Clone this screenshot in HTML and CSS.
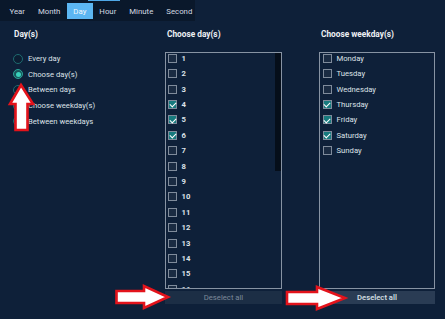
FILE: index.html
```html
<!DOCTYPE html>
<html>
<head>
<meta charset="utf-8">
<link rel="stylesheet" href="styles.css">
</head>
<body>
<div class="page">
  <div class="topline"></div>
  <nav class="tabs">
    <span class="tab">Year</span>
    <span class="tab">Month</span>
    <span class="tab active">Day</span>
    <span class="tab">Hour</span>
    <span class="tab">Minute</span>
    <span class="tab last">Second</span>
  </nav>
  <main class="cols">
    <section class="col col-mode">
      <h3 class="head">Day(s)</h3>
      <ul class="radios">
        <li class="radio-row"><span class="radio"></span>Every day</li>
        <li class="radio-row"><span class="radio on"></span>Choose day(s)</li>
        <li class="radio-row"><span class="radio"></span>Between days</li>
        <li class="radio-row"><span class="radio"></span>Choose weekday(s)</li>
        <li class="radio-row"><span class="radio"></span>Between weekdays</li>
      </ul>
    </section>
    <section class="col col-days">
      <h3 class="head">Choose day(s)</h3>
      <div class="box">
        <ul class="list nums">
          <li class="item"><span class="cb"></span>1</li>
          <li class="item"><span class="cb"></span>2</li>
          <li class="item"><span class="cb"></span>3</li>
          <li class="item"><span class="cb on"></span>4</li>
          <li class="item"><span class="cb on"></span>5</li>
          <li class="item"><span class="cb on"></span>6</li>
          <li class="item"><span class="cb"></span>7</li>
          <li class="item"><span class="cb"></span>8</li>
          <li class="item"><span class="cb"></span>9</li>
          <li class="item"><span class="cb"></span>10</li>
          <li class="item"><span class="cb"></span>11</li>
          <li class="item"><span class="cb"></span>12</li>
          <li class="item"><span class="cb"></span>13</li>
          <li class="item"><span class="cb"></span>14</li>
          <li class="item"><span class="cb"></span>15</li>
          <li class="item"><span class="cb"></span>16</li>
        </ul>
        <div class="scroll"><div class="thumb"></div></div>
      </div>
      <button class="btn disabled">Deselect all</button>
    </section>
    <section class="col col-week">
      <h3 class="head">Choose weekday(s)</h3>
      <div class="box">
        <ul class="list">
          <li class="item"><span class="cb"></span>Monday</li>
          <li class="item"><span class="cb"></span>Tuesday</li>
          <li class="item"><span class="cb"></span>Wednesday</li>
          <li class="item"><span class="cb on"></span>Thursday</li>
          <li class="item"><span class="cb on"></span>Friday</li>
          <li class="item"><span class="cb on"></span>Saturday</li>
          <li class="item"><span class="cb"></span>Sunday</li>
        </ul>
      </div>
      <button class="btn">Deselect all</button>
    </section>
  </main>
  <svg class="arrows" width="445" height="319" viewBox="0 0 445 319">
    <polygon points="21,85 33,104 27.5,104 27.5,130 15.5,130 15.5,104 10,104" />
    <polygon points="116.5,291 144,291 144,286 168,297 144,308 144,303 116.5,303" />
    <polygon points="287,292 317,292 317,287 345,298 317,309 317,304 287,304" />
  </svg>
</div>
</body>
</html>
```
FILE: styles.css
```css
* { box-sizing: border-box; }
html, body { margin: 0; padding: 0; }
body {
  background: #0e2039;
  font-family: Roboto, "Liberation Sans", sans-serif;
  font-size: 7.7px;
  color: #dde2e8;
  width: 445px;
  height: 319px;
  overflow: hidden;
}
.page { position: relative; width: 445px; height: 319px; }
.topline {
  position: absolute; left: 88px; top: 0; width: 32px; height: 1px; background: #4fa7e6;
}
.tabs {
  display: inline-flex;
  background: #0a182b;
  padding: 3px 0 2px 3px;
  height: 21px;
}
.tab {
  display: flex; align-items: center;
  padding: 0 6.5px;
  height: 16px;
  color: #d3d9e1;
  font-size: 7.8px;
}
.tab.last { padding-right: 3px; }
.tab.active { background: #5cb6f2; color: #f3f8fc; }
.cols { display: flex; padding-top: 7px; }
.col { display: flex; flex-direction: column; }
.col-mode { width: 165px; padding-left: 13px; }
.col-days { width: 117px; margin-right: 37px; }
.col-week { width: 116px; }
.head {
  margin: 0 0 12px 0;
  font-size: 8.3px;
  line-height: 12px;
  font-weight: 700;
  color: #eef1f5;
}
.col-mode .head { padding-left: 1px; }
.col-days .head, .col-week .head { padding-left: 2px; }
ul { list-style: none; margin: 0; padding: 0; }
.radios { margin-top: -1px; }
.radio-row {
  display: flex; align-items: center; height: 15.6px;
  color: #dde2e8;
}
.radio {
  width: 10px; height: 10px; border-radius: 50%;
  border: 1.5px solid #1e6b70;
  background: #0c1e33;
  margin-right: 5px;
  display: flex; align-items: center; justify-content: center;
}
.radio.on { border-color: #2aa395; background: #17555a; }
.radio.on::after {
  content: ""; width: 5px; height: 5px; border-radius: 50%; background: #39d1bb;
}
.box {
  position: relative;
  height: 237px;
  border: 1px solid #8793a3;
  overflow: hidden;
}
.list { margin-top: -2.3px; padding-left: 2px; }
.col-week .list { padding-left: 2.5px; }
.item {
  display: flex; align-items: center; height: 15.4px;
  color: #dde2e8;
}
.nums .item { font-weight: 700; }
.cb {
  width: 9px; height: 9px;
  border: 1.2px solid #7f8b9b;
  background: #1a2b42;
  margin-right: 4.5px;
  position: relative;
  flex: none;
}
.col-week .cb { margin-right: 5px; }
.cb.on { background: #177a7e; border-color: #7f8b9b; }
.cb.on::after {
  content: ""; position: absolute; left: 1.6px; top: 0.2px;
  width: 3px; height: 5px;
  border: solid #ffffff; border-width: 0 1.3px 1.3px 0;
  transform: rotate(45deg);
}
.scroll {
  position: absolute; right: 0; top: 0; width: 6.5px; height: 100%;
}
.thumb { width: 100%; height: 118px; background: #050e1a; }
.btn {
  margin-top: 1.5px;
  height: 13px;
  border: 0;
  padding: 0;
  font-family: inherit;
  font-size: 7.7px;
  background: #2a3c54;
  color: #dbe1e8;
  font-weight: 500;
}
.btn.disabled { background: #1c2e45; color: #7b8999; font-weight: 400; }
.arrows {
  position: absolute; left: 0; top: 0; pointer-events: none;
}
.arrows polygon {
  fill: #ffffff; stroke: #e3131b; stroke-width: 2.6; stroke-linejoin: miter;
}
```
